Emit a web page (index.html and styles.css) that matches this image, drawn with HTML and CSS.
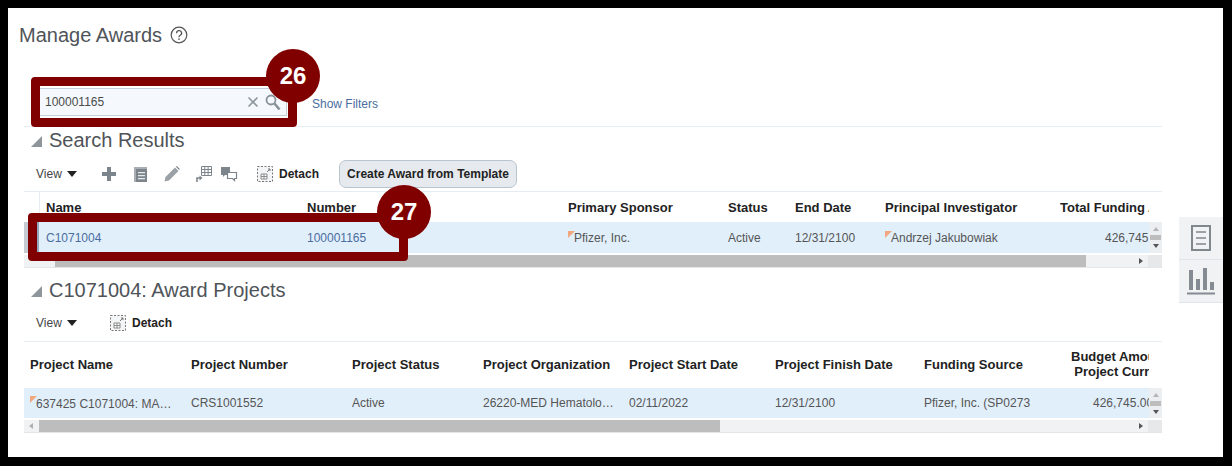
FILE: index.html
```html
<!DOCTYPE html>
<html lang="en">
<head>
<meta charset="utf-8">
<title>Manage Awards</title>
<link rel="stylesheet" href="styles.css">
</head>
<body>
<div class="frame">
  <div class="main">
    <div class="page-title">
      <h1>Manage Awards</h1>
      <svg class="help" width="18" height="18" viewBox="0 0 18 18"><circle cx="9" cy="9" r="7.8" fill="none" stroke="#555" stroke-width="1.2"/><path d="M6.6 7.2a2.5 2.5 0 1 1 3.7 2.1c-.9.5-1.3.9-1.3 1.9" fill="none" stroke="#555" stroke-width="1.3"/><rect x="8.3" y="12.4" width="1.4" height="1.5" fill="#555"/></svg>
    </div>

    <div class="search-row">
      <div class="search-box">
        <span class="search-value">100001165</span>
        <svg class="clear" width="12" height="12" viewBox="0 0 12 12"><path d="M1.5 1.5l9 9M10.500 1.500l-9 9" stroke="#8f979e" stroke-width="1.6"/></svg>
        <svg class="lens" width="16" height="17" viewBox="0 0 16 17"><circle cx="6" cy="6" r="4.500" fill="none" stroke="#8a9299" stroke-width="1.8"/><path d="M9.500 9.500l5 6" stroke="#8a9299" stroke-width="2.6"/></svg>
      </div>
      <a class="link filters">Show Filters</a>
    </div>

    <section class="results">
      <h2 class="section-title"><span class="disclosure"></span>Search Results</h2>
      <div class="toolbar">
        <span class="view">View<span class="caret"></span></span>
        <svg class="tool t-plus" width="16" height="16" viewBox="0 0 16 16"><path d="M6 1h4v5h5v4h-5v5H6v-5H1V6h5z" fill="#7d858c"/></svg>
        <svg class="tool t-list" width="16" height="16" viewBox="0 0 16 16"><path d="M1 1h13v15H1z" fill="#a8aeb3"/><path d="M3 3h11v13H3z" fill="#7d858c"/><path d="M5 6h7v1.300H5zM5 9h7v1.300H5zM5 12h7v1.300H5z" fill="#e8eaec"/></svg>
        <svg class="tool t-pen" width="18" height="18" viewBox="0 0 18 18"><path d="M1.500 16.500l1-4.500L12 2.500l3.500 3.500L6 15.500z" fill="#9aa1a7"/><path d="M12.800 1.700l1-.7 3 3-.7 1z" fill="#7d858c"/></svg>
        <svg class="tool t-grid" width="18" height="18" viewBox="0 0 18 18"><path d="M6.500 1.500h10v9h-10zM6.500 4.500h10M6.500 7.500h10M9.800 1.500v9M13.100 1.500v9" fill="none" stroke="#7d858c"/><path d="M2 17v-4h4" fill="none" stroke="#7d858c" stroke-width="1.600"/><path d="M4.500 10.500l3 2.500-3 2.500z" fill="#7d858c"/></svg>
        <svg class="tool t-chat" width="18" height="16" viewBox="0 0 18 16"><path d="M1 1h9v8H5l-2 2V9H1z" fill="#7d858c"/><path d="M7.500 6.500h9v6h-2v2l-2-2h-5z" fill="#fff" stroke="#7d858c" stroke-width="1.200"/></svg>
        <span class="detach d-first">
          <svg width="16" height="16" viewBox="0 0 16 16"><path d="M.5.500h15v15H.5z" fill="#f4f5f6" stroke="#777" stroke-dasharray="2 1.500"/><path d="M4 8h6v5H4z" fill="#fff" stroke="#8a8a8a"/><path d="M4 10.500h6M7 8v5" stroke="#8a8a8a"/><path d="M10 6l3-3M11 3h2v2" fill="none" stroke="#777"/></svg>
          Detach
        </span>
        <button class="action">Create Award from Template</button>
      </div>

      <div class="grid-table">
        <div class="cols awards head">
          <span class="c-gutter"></span>
          <span>Name</span><span>Number</span><span>Primary Sponsor</span><span>Status</span><span>End Date</span><span>Principal Investigator</span><span>Total Funding Amount</span>
        </div>
        <div class="body-row awards-row">
          <div class="cols awards cell-row">
            <span class="c-gutter selected"></span>
            <a class="link">C1071004</a><a class="link">100001165</a>
            <span><i class="flag"></i>Pfizer, Inc.</span><span>Active</span><span>12/31/2100</span>
            <span><i class="flag"></i>Andrzej Jakubowiak</span><span class="amount amount-a">426,745.00</span>
          </div>
          <div class="vscroll"><i class="up"></i><b></b><i class="down"></i></div>
        </div>
        <div class="hscroll">
          <div class="track awards-track"><b></b><i class="right"></i></div>
          <div class="corner"></div>
        </div>
      </div>
    </section>

    <section class="projects">
      <h2 class="section-title"><span class="disclosure"></span>C1071004: Award Projects</h2>
      <div class="toolbar short">
        <span class="view">View<span class="caret"></span></span>
        <span class="detach d-second">
          <svg width="16" height="16" viewBox="0 0 16 16"><path d="M.5.500h15v15H.5z" fill="#f4f5f6" stroke="#777" stroke-dasharray="2 1.500"/><path d="M4 8h6v5H4z" fill="#fff" stroke="#8a8a8a"/><path d="M4 10.500h6M7 8v5" stroke="#8a8a8a"/><path d="M10 6l3-3M11 3h2v2" fill="none" stroke="#777"/></svg>
          Detach
        </span>
      </div>

      <div class="grid-table">
        <div class="cols proj head tall">
          <span>Project Name</span><span>Project Number</span><span>Project Status</span><span>Project Organization</span><span>Project Start Date</span><span>Project Finish Date</span><span>Funding Source</span>
          <span class="two-line"><span class="two-line-inner">Budget Amount in<br>Project Currency</span></span>
        </div>
        <div class="body-row proj-row">
          <div class="cols proj cell-row">
            <span class="first"><i class="flag"></i>637425 C1071004: MA…</span><span>CRS1001552</span><span>Active</span><span>26220-MED Hematolo…</span><span>02/11/2022</span><span>12/31/2100</span><span>Pfizer, Inc. (SP0273</span><span class="amount amount-b">426,745.00</span>
          </div>
          <div class="vscroll"><i class="up"></i><b></b><i class="down"></i></div>
        </div>
        <div class="hscroll">
          <div class="track proj-track"><i class="left"></i><b></b><i class="right"></i></div>
          <div class="corner"></div>
        </div>
      </div>
    </section>
  </div>

  <aside class="side-tabs">
    <div class="side-tab">
      <svg width="20" height="26" viewBox="0 0 20 26"><path d="M1 1h18v24H1z" fill="none" stroke="#80878d" stroke-width="2"/><path d="M5 7h10M5 13h10M5 19h10" stroke="#80878d" stroke-width="1.600"/></svg>
    </div>
    <div class="side-tab">
      <svg width="28" height="28" viewBox="0 0 28 28"><path d="M2 3h4v20H2zM9 12h4v11H9zM16 1h4v22h-4zM23 15h4v8h-4z" fill="#848b92"/><path d="M0 26.500h28" stroke="#848b92" stroke-width="2"/></svg>
    </div>
  </aside>

  <div class="callout box-search"></div>
  <div class="callout box-row"></div>
  <div class="badge badge-26">26</div>
  <div class="badge badge-27">27</div>
</div>
</body>
</html>
```

FILE: styles.css
```css
* { box-sizing: border-box; }
html, body { margin: 0; height: 466px; overflow: hidden; }
body {
  background: #000;
  padding: 8px 9px 9px 8px;
  font-family: "Liberation Sans", Arial, sans-serif;
  font-size: 12px;
  color: #555;
}
.frame {
  position: relative;
  height: 449px;
  background: #fff;
  padding-left: 16px;
  overflow: hidden;
}
.main { width: 1138px; }

.page-title {
  display: flex;
  align-items: center;
  gap: 8px;
  height: 24px;
  margin: 15px 0 0 -5px;
}
h1 { margin: 0; font-size: 20px; font-weight: 400; color: #4f5459; }

.search-row {
  display: flex;
  align-items: center;
  height: 28px;
  margin-top: 41px;
  padding-left: 15px;
  gap: 25px;
}
.search-box {
  display: flex;
  align-items: center;
  width: 248px;
  height: 28px;
  padding: 0 5px 0 5px;
  background: #f5f9fd;
  border: 1px solid #c6d0da;
  color: #4a4a4a;
}
.search-value { flex: 1; }
.clear { margin-right: 6px; }
.link { color: #4a6d9e; }
.filters { margin-top: 4px; }

.results { border-top: 1px solid #e6ecf1; margin-top: 10px; }
.section-title {
  display: flex;
  align-items: center;
  height: 26px;
  margin: 0;
  padding-left: 7px;
  font-size: 20px;
  font-weight: 400;
  color: #4f5459;
}
.disclosure {
  width: 0;
  height: 0;
  margin-right: 7px;
  margin-top: 2px;
  border-style: solid;
  border-width: 0 0 11px 11px;
  border-color: transparent transparent #8e959b transparent;
}
.toolbar {
  display: flex;
  align-items: center;
  height: 34px;
  padding-left: 12px;
  margin-top: 4px;
}
.view { display: flex; align-items: center; color: #444; width: 54px; }
.caret {
  margin-left: 5px;
  border-style: solid;
  border-width: 6px 5px 0 5px;
  border-color: #222 transparent transparent transparent;
}
.t-plus { margin-left: 11px; }
.t-list { margin-left: 16px; }
.t-pen { margin-left: 14px; }
.t-grid { margin-left: 14px; }
.t-chat { margin-left: 7px; }
.detach { display: flex; align-items: center; gap: 6px; font-weight: 700; color: #222; }
.d-first { margin-left: 19px; }
.d-second { margin-left: 20px; }
.action {
  height: 28px;
  width: 178px;
  margin-left: 20px;
  padding: 0;
  border: 1px solid #b8c4ce;
  border-radius: 7px;
  background: #e6eaee;
  color: #222;
  font: 700 12px "Liberation Sans", Arial, sans-serif;
}
.toolbar.short { height: 36px; margin-top: 2px; }

.grid-table { border-top: 1px solid #e6ecf1; position: relative; }
.cols { display: grid; align-items: center; width: 1125px; overflow: hidden; }
.cols > span, .cols > a { white-space: nowrap; min-width: 0; overflow: hidden; }
.awards { grid-template-columns: 22px 261px 261px 160px 67px 90px 175px 89px; }
.proj { padding-left: 6px; grid-template-columns: 161px 161px 131px 146px 146px 149px 135px 90px; }
.head { height: 30px; font-size: 13px; font-weight: 700; color: #222; }
.head.tall { height: 46px; padding-bottom: 2px; }
.head .c-gutter { height: 100%; border-right: 1px solid #e6ecf1; margin-right: 6px; }
.two-line { line-height: 15px; }
.two-line-inner { display: block; width: 108px; margin-left: 12px; text-align: right; }
.amount-a { padding-left: 45px; }
.amount-b { padding-left: 34px; }
.c-gutter { display: block; }
.selected {
  height: 100%;
  width: 15px;
  background: #c4cbd2;
  border-right: 3px solid #8fa6bd;
}
.body-row { display: flex; background: #e1effb; }
.awards-row { height: 31px; }
.proj-row { height: 30px; }
.cell-row { height: 100%; color: #555; }
.flag {
  display: inline-block;
  width: 0;
  height: 0;
  vertical-align: 4px;
  margin-right: -1px;
  border-style: solid;
  border-width: 7px 7px 0 0;
  border-color: #f2a77f transparent transparent transparent;
}
.first .flag { vertical-align: 5px; margin-right: -1px; }
.vscroll {
  position: relative;
  width: 13px;
  background: #eceff1;
  display: flex;
  flex-direction: column;
  justify-content: center;
  align-items: center;
  gap: 4px;
}
.vscroll b { display: block; width: 11px; height: 5px; background: #bdbdbd; }
.up, .down, .left, .right { display: block; width: 0; height: 0; border-style: solid; }
.up { border-width: 0 3px 4px 3px; border-color: transparent transparent #b5b5b5 transparent; }
.down { border-width: 4px 3px 0 3px; border-color: #555 transparent transparent transparent; }
.right { border-width: 3px 0 3px 4px; border-color: transparent transparent transparent #555; }
.left { border-width: 3px 4px 3px 0; border-color: transparent #b0b0b0 transparent transparent; }

.hscroll {
  display: flex;
  height: 13px;
  margin-top: 2px;
  background: #f1f2f3;
  border-bottom: 1px solid #e4e6e8;
}
.track { flex: 1; display: flex; align-items: center; }
.track b { display: block; height: 12px; background: #bdbdbd; }
.track .right { margin-left: auto; margin-right: 5px; }
.awards-track b { width: 1031px; margin-left: 31px; }
.proj-track { padding-left: 5px; }
.proj-track b { width: 681px; margin-left: 6px; }
.corner { width: 14px; background: #e7e8ea; }

.projects { margin-top: 9px; }

.side-tabs {
  position: absolute;
  left: 1171px;
  top: 209px;
  width: 44px;
  background: #f1f2f3;
}
.side-tab {
  height: 43px;
  display: flex;
  align-items: center;
  justify-content: center;
  border-bottom: 1px solid #dfe5ea;
}

.callout {
  position: absolute;
  border: 9px solid #800000;
  border-radius: 4px;
}
.box-search { left: 23px; top: 69px; width: 266px; height: 50px; }
.box-row { left: 20px; top: 205px; width: 380px; height: 48px; }
.badge {
  position: absolute;
  width: 54px;
  height: 54px;
  border-radius: 50%;
  background: #800000;
  color: #fff;
  font-size: 24px;
  font-weight: 700;
  line-height: 54px;
  text-align: center;
}
.badge-26 { left: 258px; top: 41px; }
.badge-27 { left: 369px; top: 177px; }
```
